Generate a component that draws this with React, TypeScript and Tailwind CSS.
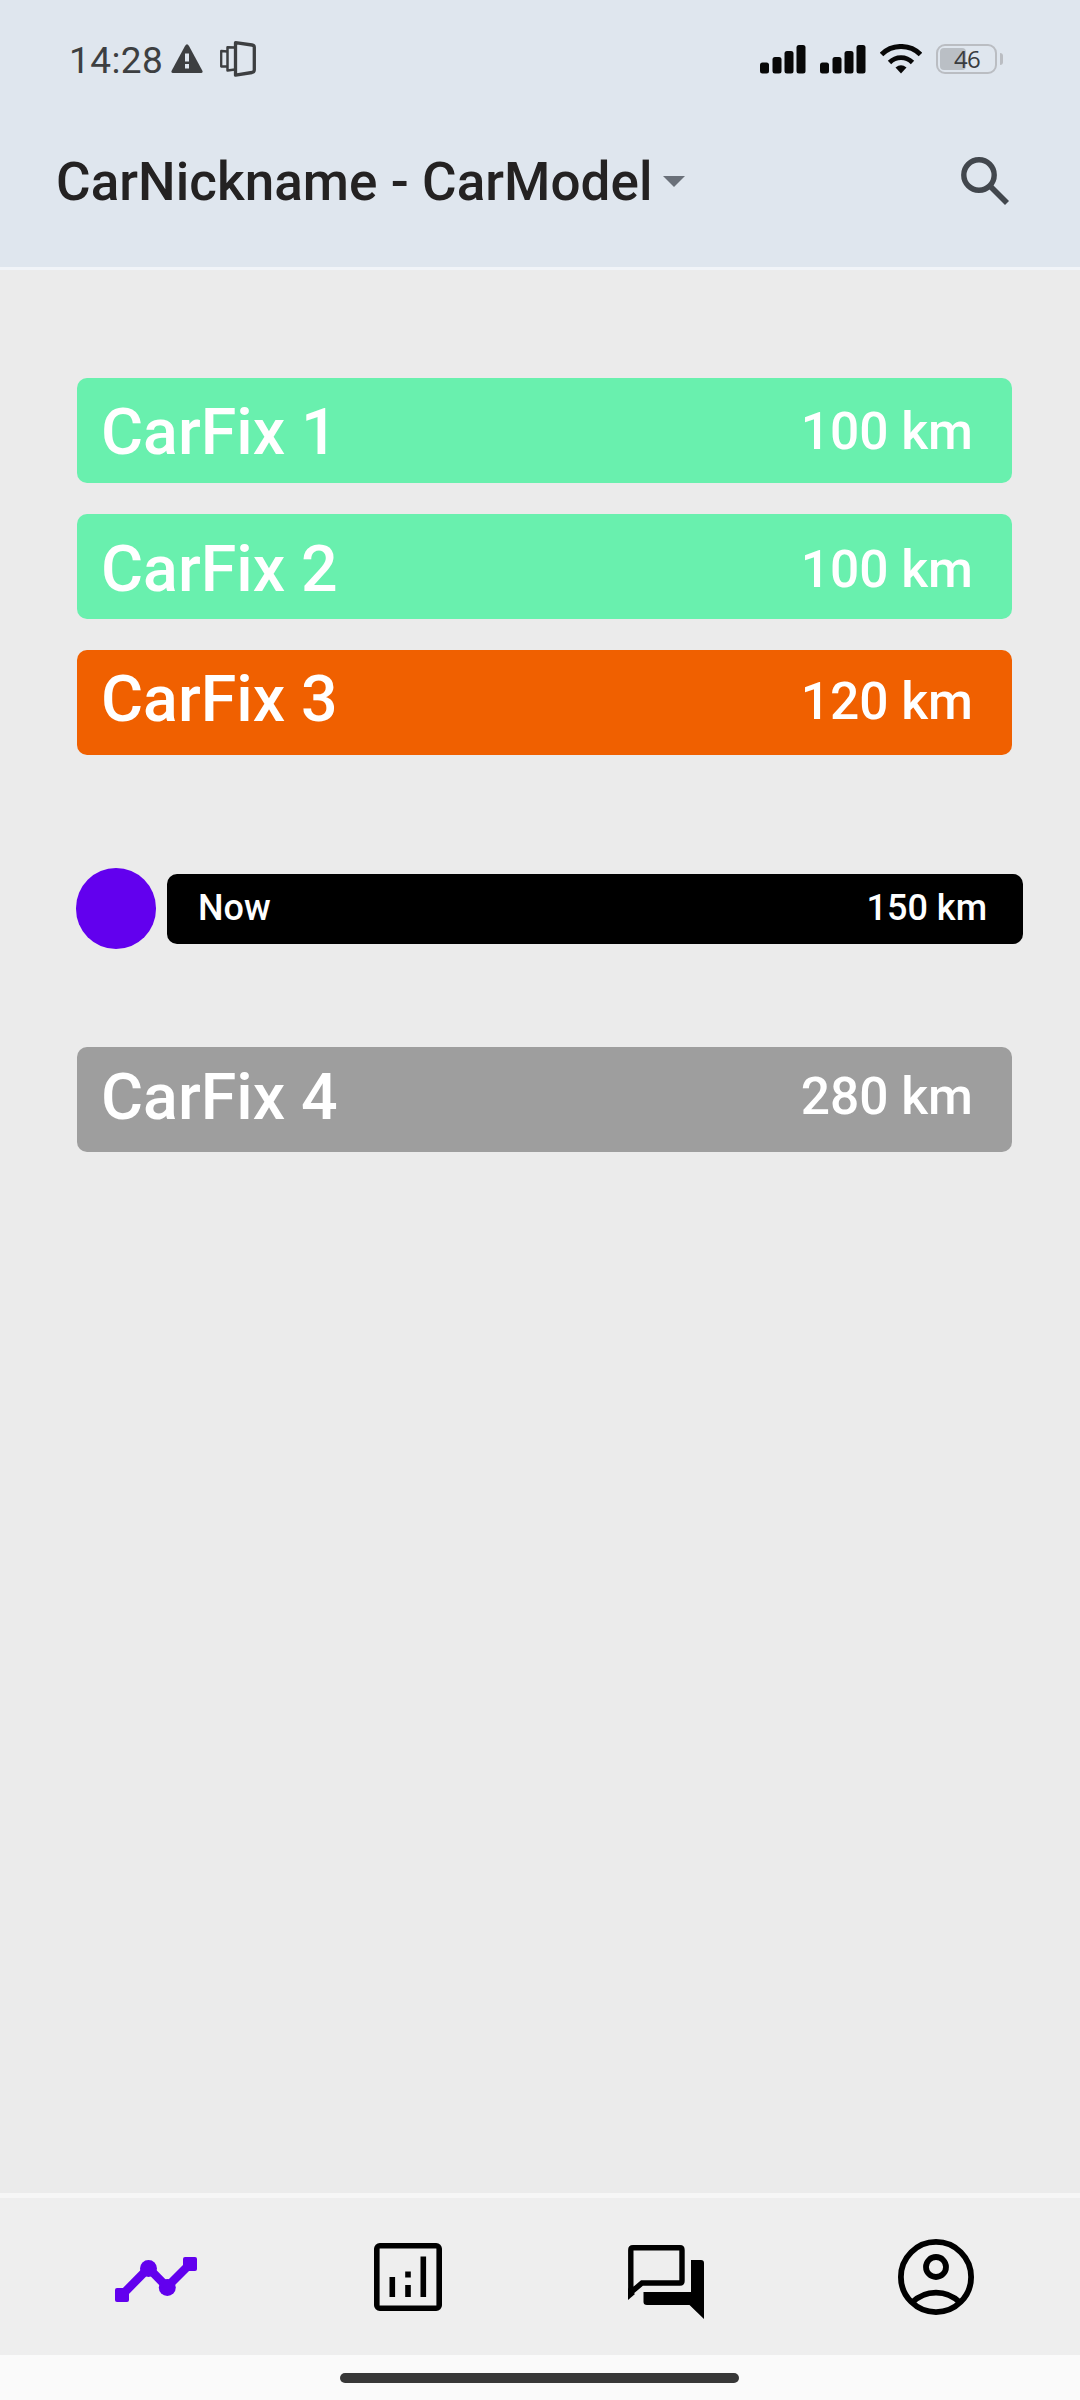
import React from "react";

type Fix = {
  name: string;
  distance: string;
  row: string;
  nameOffset: string;
  distanceOffset: string;
};

const fixes: Fix[] = [
  { name: "CarFix 1", distance: "100 km", row: "bg-[#69f0ae]", nameOffset: "pt-[2px]", distanceOffset: "pt-[2px]" },
  { name: "CarFix 2", distance: "100 km", row: "bg-[#69f0ae] mt-[31px]", nameOffset: "pt-[4px]", distanceOffset: "pt-[6px]" },
  { name: "CarFix 3", distance: "120 km", row: "bg-[#f06000] mt-[31px]", nameOffset: "pb-[8px]", distanceOffset: "pb-[2px]" },
];

const upcoming: Fix = {
  name: "CarFix 4",
  distance: "280 km",
  row: "bg-[#9e9e9e] mt-[98px]",
  nameOffset: "pb-[6px]",
  distanceOffset: "pb-[6px]",
};

function FixRow({ fix }: { fix: Fix }) {
  return (
    <div className={`ml-[77px] flex h-[105px] w-[935px] items-center justify-between rounded-[10px] pl-[24px] pr-[39px] text-white ${fix.row}`}>
      <span className={`text-[64.5px] leading-[64px] ${fix.nameOffset}`}>{fix.name}</span>
      <span className={`text-[51.5px] leading-[51px] ${fix.distanceOffset}`}>{fix.distance}</span>
    </div>
  );
}

function Signal() {
  return (
    <svg width="46" height="29" viewBox="0 0 46 29" fill="#080808">
      <rect x="0" y="17.5" width="9" height="11" rx="2.5" />
      <rect x="12.5" y="12" width="9" height="16.500" rx="2.500" />
      <rect x="24.500" y="6" width="9" height="22.500" rx="2.500" />
      <rect x="36.500" y="0" width="9" height="28.500" rx="2.500" />
    </svg>
  );
}

function StatusBar() {
  return (
    <div className="flex h-[118px] items-center pl-[69px] pr-[77px]">
      <span className="pt-[2px] text-[37px] leading-none font-normal tracking-[0.4px] text-[#3d3f41]">14:28</span>
      <svg className="mt-[-1px] ml-[8px]" width="32" height="29" viewBox="0 0 32 29">
        <path d="M14 2Q16-1.500 18 2L31.500 27Q32 29 30 29H2Q0 29 .5 27Z" fill="#3d3f41" />
        <path d="M14 9.500h4v8h-4zM14 20h4v4.500h-4z" fill="#dfe6ee" />
      </svg>
      <svg className="ml-[17px]" width="36" height="36" viewBox="0 0 36 36" fill="none" stroke="#3d3f41" strokeLinejoin="round">
        <path d="M15.500 1.700 32 4Q34.300 4.300 34.300 6V29Q34.300 31 32 31.500L15.500 34.200Z" strokeWidth="3.300" />
        <path d="M15 6.500 7.500 6.200V29.500L15 28.500" strokeWidth="2.500" />
        <path d="M7.500 10.500 1.200 10V25.500L7.500 25.500" strokeWidth="2.300" />
      </svg>
      <div className="ml-auto flex items-center">
        <Signal />
        <div className="w-[14px]" />
        <Signal />
        <svg className="ml-[14px]" width="42" height="30" viewBox="0 0 42 30">
          <path d="M1.500 10.500C12-.2 30-.2 40.500 10.500" fill="none" stroke="#080808" strokeWidth="5" />
          <path d="M9.500 18.500C16 12 26 12 32.500 18.500" fill="none" stroke="#080808" strokeWidth="4.800" />
          <path d="M15.500 23.500Q21 19 26.500 23.500L21 29.500Z" fill="#080808" />
        </svg>
        <div className="ml-[14px] flex h-[30px] w-[61px] items-center rounded-[9px] border-2 border-[#babdc2] pl-[2px]">
          <div className="flex h-[22px] w-[26px] items-center rounded-[4px] bg-[#babfc5] pl-[14px]">
            <span className="text-[24px] leading-none font-medium tracking-[-0.8px] text-[#3a3c3e] [font-family:'Open_Sans',sans-serif]">46</span>
          </div>
        </div>
        <div className="ml-[3px] h-[12px] w-[3px] rounded-r-full bg-[#babdc2]" />
      </div>
    </div>
  );
}

export default function App() {
  return (
    <div className="flex h-[2400px] w-[1080px] flex-col overflow-hidden bg-[#ebebeb] font-medium [font-family:Roboto,sans-serif]">
      <header className="h-[270px] border-b-[3px] border-[#f1f4f8] bg-[#dfe6ee]">
        <StatusBar />
        <div className="flex h-[126px] items-center pl-[56px] pr-[70px]">
          <h1 className="pt-[2px] text-[53px] leading-none tracking-[0.05px] text-[#242222]">CarNickname - CarModel</h1>
          <svg className="ml-[10px]" width="22" height="11" viewBox="0 0 22 11">
            <path d="M0 0H22L11 11Z" fill="#6a7079" />
          </svg>
          <svg className="ml-auto" width="49" height="49" viewBox="0 0 49 49" fill="none" stroke="#42474d">
            <circle cx="18" cy="18" r="15.200" strokeWidth="5.400" />
            <path d="M28.500 28.500 46 46" strokeWidth="5.600" />
          </svg>
        </div>
      </header>

      <main className="flex-1 pt-[108px]">
        {fixes.map((fix) => (
          <FixRow key={fix.name} fix={fix} />
        ))}
        <div className="mt-[113px] ml-[76px] flex items-center gap-[11px]">
          <div className="h-[81px] w-[80px] rounded-full bg-[#6200ee]" />
          <div className="flex h-[70px] w-[856px] items-center justify-between rounded-[10px] bg-black pr-[36px] pb-[2px] pl-[31px] text-[36px] leading-none text-white">
            <span>Now</span>
            <span>150 km</span>
          </div>
        </div>
        <FixRow fix={upcoming} />
      </main>

      <nav className="flex h-[162px] items-start border-t-[5px] border-[#f6f6f6] bg-[#eeeeee] pl-[115px]">
        <svg className="mt-[59px]" width="82" height="45" viewBox="0 0 82 45" fill="#6200ee">
          <path d="M7 38 33.500 11 52 30 75 7" fill="none" stroke="#6200ee" strokeWidth="8.500" />
          <rect x="0" y="31" width="14" height="14" rx="2" />
          <circle cx="33.500" cy="11.500" r="8.500" />
          <circle cx="52.300" cy="30.500" r="8.500" />
          <rect x="68" y="0" width="14" height="14" rx="2" />
        </svg>
        <svg className="mt-[45px] ml-[177px]" width="68" height="68" viewBox="0 0 68 68" fill="none" stroke="#000">
          <rect x="2.800" y="2.800" width="62.400" height="62.400" rx="3" strokeWidth="5.600" />
          <path d="M18.300 34v20M34 42v12M34 28.500v6M49.300 13.500v40.500" strokeWidth="5.600" />
        </svg>
        <svg className="mt-[47px] ml-[186px]" width="76" height="74" viewBox="0 0 76 74">
          <path d="M2.800 47.500V5Q2.800 2.700 5 2.700H52Q54 2.700 54 5V36Q54 38 52 38H14Z" fill="none" stroke="#000" strokeWidth="5.400" />
          <path d="M0 43V55L7 49Z" />
          <path d="M63 15H73Q76 15 76 18V74L61.500 60H19Q15.500 60 15.500 57V47H63Z" />
        </svg>
        <svg className="mt-[41px] ml-[194px]" width="76" height="76" viewBox="0 0 76 76" fill="none" stroke="#000" strokeWidth="5.800">
          <circle cx="38" cy="38" r="35.100" />
          <circle cx="38" cy="28" r="10" />
          <path d="M14 63.500C27.500 50.200 48.500 50.200 62 63.500" />
        </svg>
      </nav>
      <div className="flex h-[45px] justify-center bg-[#fafafa] pt-[18px] pr-[1px]">
        <div className="h-[10px] w-[399px] rounded-full bg-[#373737]" />
      </div>
    </div>
  );
}
